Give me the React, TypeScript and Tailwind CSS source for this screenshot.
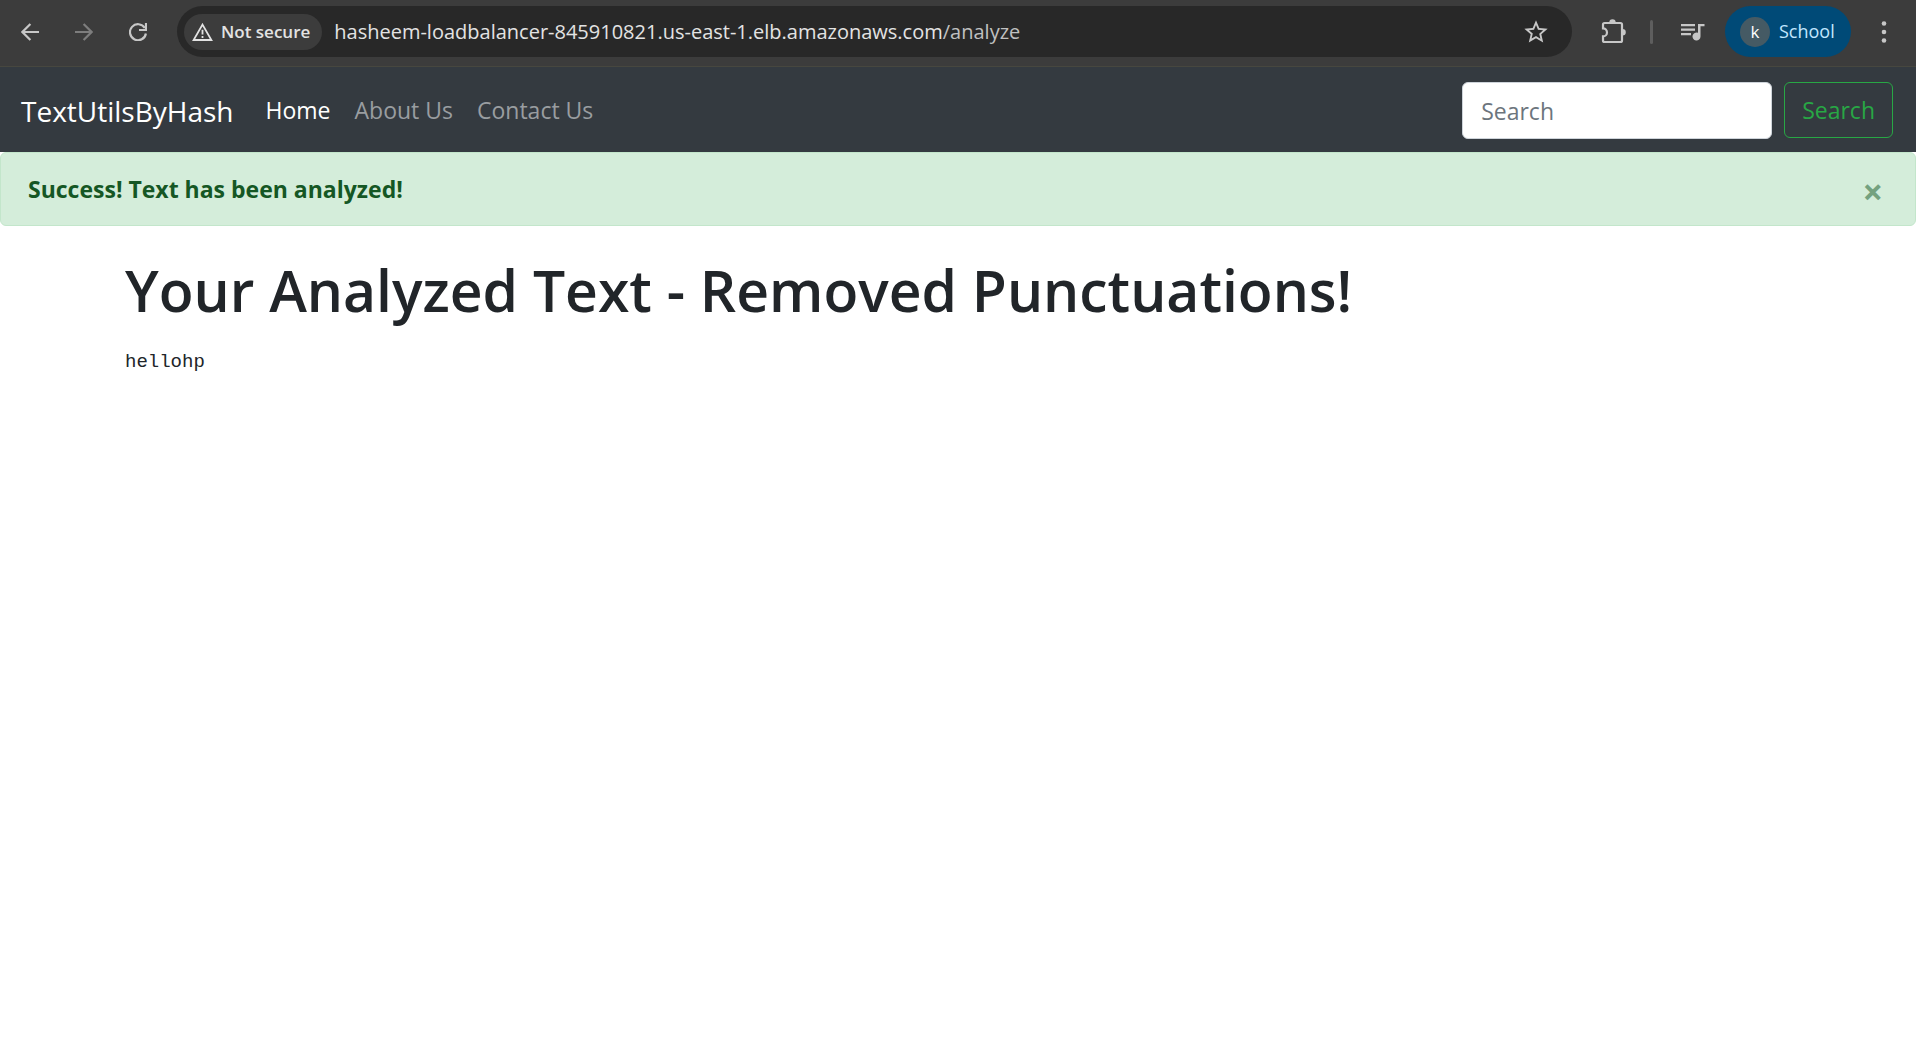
import { useState, type ReactNode } from "react";

function IconButton({
  label,
  tone = "text-[#c7c7c7]",
  className = "",
  children,
}: {
  label: string;
  tone?: string;
  className?: string;
  children: ReactNode;
}) {
  return (
    <button
      type="button"
      aria-label={label}
      className={`flex h-9 w-9 shrink-0 items-center justify-center rounded-full ${tone} ${className}`}
    >
      {children}
    </button>
  );
}

function ArrowIcon({ flip = false }: { flip?: boolean }) {
  return (
    <svg width="18" height="18" viewBox="0 0 18 18" fill="none" stroke="currentColor" strokeWidth="2.2">
      {flip ? <path d="M0 9h16.5M8.600 1l8 8-8 8" /> : <path d="M18 9H1.500M9.400 1l-8 8 8 8" />}
    </svg>
  );
}

function ReloadIcon() {
  return (
    <svg width="18" height="18" viewBox="0 0 18 18" fill="none" stroke="currentColor" strokeWidth="2.2">
      <path d="M16.900 10.500A8 8 0 1 1 15.800 5" />
      <path d="M17 0v7h-7" />
    </svg>
  );
}

function WarningIcon() {
  return (
    <svg width="21" height="18" viewBox="0 0 21 18" fill="none" stroke="currentColor" strokeWidth="1.8">
      <path d="M10.500 1.600 19.400 17H1.600z" />
      <path d="M10.500 6.800v4.800M10.500 12.900v2" />
    </svg>
  );
}

function StarIcon() {
  return (
    <svg width="28" height="28" viewBox="0 0 24 24" fill="currentColor">
      <path d="m22 9.240-7.190-.620L12 2 9.190 8.630 2 9.240l5.460 4.730L5.820 21 12 17.270 18.180 21l-1.630-7.030zM12 15.400l-3.760 2.270 1-4.280-3.320-2.880 4.380-.380L12 6.100l1.710 4.040 4.380.380-3.320 2.880 1 4.280z" />
    </svg>
  );
}

function PuzzleIcon() {
  return (
    <svg width="26" height="26" viewBox="0 0 26 26">
      <path
        d="M3.500 4h16A1.500 1.500 0 0 1 21 5.500v16a1.500 1.500 0 0 1-1.500 1.500h-16A1.500 1.500 0 0 1 2 21.500V17.400a4 4 0 0 0 0-8V5.500A1.500 1.500 0 0 1 3.500 4z"
        fill="none"
        stroke="currentColor"
        strokeWidth="2.2"
      />
      <path d="M8.300 3.500a3.200 3.200 0 0 1 6.400 0zM21.500 10a3.300 3.300 0 0 1 0 6.600z" fill="currentColor" />
    </svg>
  );
}

function MediaIcon() {
  return (
    <svg width="24" height="18" viewBox="0 0 24 18" fill="currentColor">
      <path d="M0 1h14v2.200H0zM0 5.500h14v2.200H0zM0 10h10v2.200H0z" />
      <path d="M17 1h6.500v2.300h-4V13.500a4 4 0 1 1-2.500-3.700z" />
    </svg>
  );
}

function MoreIcon() {
  return (
    <svg width="6" height="22" viewBox="0 0 6 22" fill="currentColor">
      <circle cx="3" cy="2.500" r="2.300" />
      <circle cx="3" cy="11" r="2.300" />
      <circle cx="3" cy="19.500" r="2.300" />
    </svg>
  );
}

function BrowserBar() {
  return (
    <header className="flex items-start border-b border-[#47473f] bg-[#3c3c3c] pt-1.5 pr-3.5 pb-[9px] pl-3">
      <div className="flex h-[51px] items-center gap-[18px]">
        <IconButton label="Back">
          <ArrowIcon />
        </IconButton>
        <IconButton label="Forward" tone="text-[#7d7d7d]">
          <ArrowIcon flip />
        </IconButton>
        <IconButton label="Reload">
          <ReloadIcon />
        </IconButton>
      </div>
      <div className="ml-[21px] flex h-[51px] min-w-0 flex-1 items-center rounded-full bg-[#282828] pr-[18px] pl-[7px]">
        <button
          type="button"
          className="flex h-9 shrink-0 items-center gap-2 rounded-full bg-[#3c3c3c] pr-3 pl-2 text-[17px] font-semibold text-[#e3e3e3]"
        >
          <WarningIcon />
          Not secure
        </button>
        <div className="ml-3 min-w-0 flex-1 truncate text-[20px] text-[#e3e3e3]">
          hasheem-loadbalancer-845910821.us-east-1.elb.amazonaws.com<span className="text-[#c0c0c0]">/analyze</span>
        </div>
        <IconButton label="Bookmark this page">
          <StarIcon />
        </IconButton>
      </div>
      <div className="flex h-[51px] shrink-0 items-center">
        <IconButton label="Extensions" className="ml-6">
          <PuzzleIcon />
        </IconButton>
        <span className="mx-[18px] h-6 w-[3px] rounded-full bg-[#5e5e5e]" />
        <IconButton label="Media controls" className="ml-1">
          <MediaIcon />
        </IconButton>
        <button
          type="button"
          className="ml-3.5 flex h-[51px] w-[126px] items-center gap-[9px] rounded-full bg-[#004a77] pl-[15px] text-[18px] text-[#c2e7ff]"
        >
          <span className="flex h-[30px] w-[30px] items-center justify-center rounded-full bg-[#455a64] text-[17px] leading-none text-white">
            k
          </span>
          School
        </button>
        <IconButton label="More" className="ml-[15px]">
          <MoreIcon />
        </IconButton>
      </div>
    </header>
  );
}

function SiteNav() {
  return (
    <nav className="flex h-[85px] items-center bg-[#343a40] pt-0.5 pr-[23px] pl-[21px]">
      <a href="#" className="text-[28px] text-white">
        TextUtilsByHash
      </a>
      <div className="ml-8 flex gap-6 text-[23px] text-[#999da0]">
        <a href="#" className="text-white">
          Home
        </a>
        <a href="#about">About Us</a>
        <a href="#contact">Contact Us</a>
      </div>
      <form className="ml-auto flex gap-3 text-[23px]" onSubmit={(e) => e.preventDefault()}>
        <input
          type="search"
          aria-label="Search"
          placeholder="Search"
          className="h-[57px] w-[310px] rounded-md border border-[#ced4da] bg-white px-[18px] text-[#495057] placeholder:text-[#6c757d]"
        />
        <button type="submit" className="h-14 rounded-md border border-[#28a745] px-[17px] text-[#28a745]">
          Search
        </button>
      </form>
    </nav>
  );
}

export default function App() {
  const [open, setOpen] = useState(true);
  return (
    <div className="min-h-screen bg-white font-['Open_Sans',sans-serif] text-[#212529]">
      <BrowserBar />
      <SiteNav />
      {open && (
        <div
          role="alert"
          className="flex h-[74px] items-center justify-between rounded-md border border-[#c3e6cb] bg-[#d4edda] pr-5 pl-[27px] text-[#155724]"
        >
          <strong className="text-[23px] font-bold">Success! Text has been analyzed!</strong>
          <button
            type="button"
            aria-label="Close"
            onClick={() => setOpen(false)}
            className="px-3 pt-1.5 text-[36px] leading-none font-bold text-[#74a27f]"
          >
            ×
          </button>
        </div>
      )}
      <main className="px-[125px] pt-6">
        <h1 className="text-[57px] leading-[80px] font-semibold">Your Analyzed Text - Removed Punctuations!</h1>
        <pre className="mt-4 font-['Liberation_Mono',monospace] text-[19px] leading-8">hellohp</pre>
      </main>
    </div>
  );
}
